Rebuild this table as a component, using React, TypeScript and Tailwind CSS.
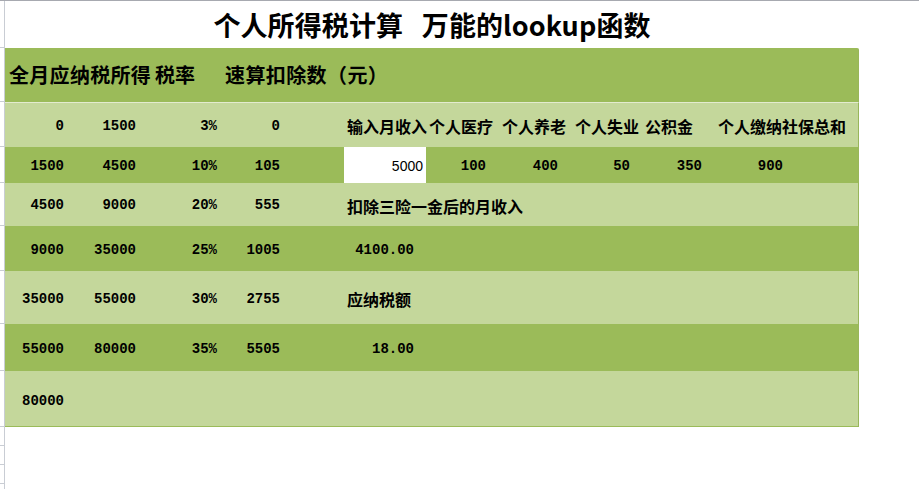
import React from "react";

const CN = "font-['Noto_Sans_CJK_SC',sans-serif] font-bold";
const MONO = "font-['Liberation_Mono','Noto_Sans_CJK_SC',monospace] font-bold text-[14px]";

function Strip() {
  return <div className="w-[5px] shrink-0 border-r border-b border-[#c9cdd4]" />;
}

function Nums({ a, b, c, d }: { a?: string; b?: string; c?: string; d?: string }) {
  return (
    <>
      <span className={`w-[59px] shrink-0 text-right ${MONO}`}>{a}</span>
      <span className={`w-[72px] shrink-0 text-right ${MONO}`}>{b}</span>
      <span className={`w-[81px] shrink-0 text-right ${MONO}`}>{c}</span>
      <span className={`w-[63px] shrink-0 text-right ${MONO}`}>{d}</span>
    </>
  );
}

function Row({
  h,
  dark,
  children,
  extra = "",
}: {
  h: string;
  dark: boolean;
  children?: React.ReactNode;
  extra?: string;
}) {
  return (
    <div className={`flex ${h}`}>
      <Strip />
      <div
        className={`w-[854px] shrink-0 flex items-center text-black border-r border-[#98b65a] ${
          dark ? "bg-[#9bbb59]" : "bg-[#c4d79b]"
        } ${extra}`}
      >
        {children}
      </div>
    </div>
  );
}

export default function App() {
  return (
    <div className="w-[919px] h-[489px] bg-white border-t border-[#a7a9b0] overflow-hidden">
      {/* title */}
      <div className="flex h-[47px]">
        <Strip />
        <div className="w-[854px] shrink-0 flex items-center justify-center">
          <span className={`${CN} text-[27px] leading-none text-black tracking-[0.1px]`}>
            个人所得税计算&nbsp;&nbsp;&nbsp;万能的lookup函数
          </span>
        </div>
      </div>
      {/* header */}
      <div className="flex h-[54px]">
        <Strip />
        <div className="w-[854px] shrink-0 flex items-center bg-[#9bbb59] border-r border-[#98b65a] rounded-tr-[2px]">
          <span className={`${CN} text-[20px] pl-[4px] w-[150px] shrink-0 tracking-[0.3px] whitespace-nowrap`}>全月应纳税所得</span>
          <span className={`${CN} text-[20px] w-[70px] shrink-0`}>税率</span>
          <span className={`${CN} text-[20px] tracking-[0.4px]`}>速算扣除数（元）</span>
        </div>
      </div>
      <Row h="h-[45px]" dark={false} extra="border-t border-t-[#e3ebcf] pt-[2px]">
        <Nums a="0" b="1500" c="3%" d="0" />
        <span className="w-[67px] shrink-0" />
        <span className={`${CN} text-[16px] w-[82px] shrink-0`}>输入月收入</span>
        <span className={`${CN} text-[16px] w-[73px] shrink-0`}>个人医疗</span>
        <span className={`${CN} text-[16px] w-[73px] shrink-0`}>个人养老</span>
        <span className={`${CN} text-[16px] w-[70px] shrink-0`}>个人失业</span>
        <span className={`${CN} text-[16px] w-[73px] shrink-0`}>公积金</span>
        <span className={`${CN} text-[16px]`}>个人缴纳社保总和</span>
      </Row>
      <Row h="h-[36px]" dark={true} extra="!items-stretch">
        <div className="flex items-center pt-[2px]">
          <Nums a="1500" b="4500" c="10%" d="105" />
        </div>
        <span className="w-[64px] shrink-0" />
        <div className="w-[82px] shrink-0 bg-white flex items-center justify-end pr-[3px] pt-[2px] font-['Liberation_Sans',sans-serif] text-[14px] text-black">
          5000
        </div>
        <div className="flex items-center pt-[2px]">
          <span className={`w-[60px] shrink-0 text-right ${MONO}`}>100</span>
          <span className={`w-[72px] shrink-0 text-right ${MONO}`}>400</span>
          <span className={`w-[72px] shrink-0 text-right ${MONO}`}>50</span>
          <span className={`w-[72px] shrink-0 text-right ${MONO}`}>350</span>
          <span className={`w-[81px] shrink-0 text-right ${MONO}`}>900</span>
        </div>
      </Row>
      <Row h="h-[43px]" dark={false} extra="pt-[2px]">
        <Nums a="4500" b="9000" c="20%" d="555" />
        <span className="w-[67px] shrink-0" />
        <span className={`${CN} text-[16px]`}>扣除三险一金后的月收入</span>
      </Row>
      <Row h="h-[45px]" dark={true} extra="pt-[3px]">
        <Nums a="9000" b="35000" c="25%" d="1005" />
        <span className={`w-[134px] shrink-0 text-right ${MONO}`}>4100.00</span>
      </Row>
      <Row h="h-[53px]" dark={false} extra="pt-[3px]">
        <Nums a="35000" b="55000" c="30%" d="2755" />
        <span className="w-[67px] shrink-0" />
        <span className={`${CN} text-[16px]`}>应纳税额</span>
      </Row>
      <Row h="h-[47px]" dark={true} extra="pt-[4px]">
        <Nums a="55000" b="80000" c="35%" d="5505" />
        <span className={`w-[134px] shrink-0 text-right ${MONO}`}>18.00</span>
      </Row>
      <Row h="h-[56px]" dark={false} extra="border-b border-b-[#9bbb59] pt-[5px]">
        <Nums a="80000" />
      </Row>
      <div className="flex h-[19px]">
        <Strip />
      </div>
      <div className="flex h-[19px]">
        <Strip />
      </div>
      <div className="flex h-[19px]">
        <Strip />
      </div>
      <div className="flex h-[19px]">
        <Strip />
      </div>
    </div>
  );
}
